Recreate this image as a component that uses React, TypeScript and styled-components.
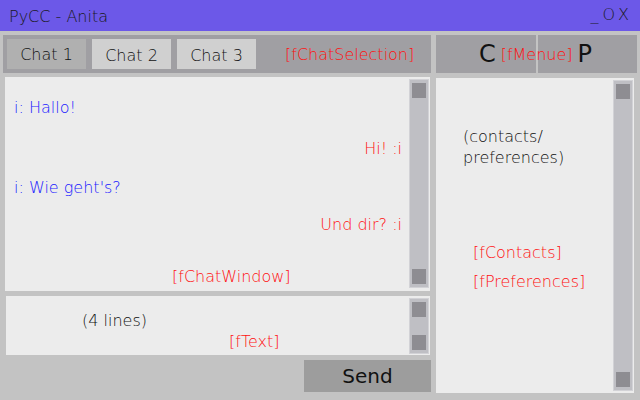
import React from "react";
import styled, { createGlobalStyle } from "styled-components";

const Global = createGlobalStyle`
  html, body { margin: 0; padding: 0; }
  body { font-family: "DejaVu Sans", sans-serif; }
`;

const Window = styled.div`
  width: 640px;
  height: 400px;
  background: #c3c3c3;
  display: flex;
  flex-direction: column;
  overflow: hidden;
`;

const TitleBar = styled.div`
  height: 31px;
  background: #6c58e8;
  display: flex;
  align-items: center;
  justify-content: space-between;
  padding: 0 11px 0 9px;
  color: #1a1a1a;
  font-size: 16px;
  font-weight: 200;
`;

const Title = styled.span`
  margin-top: 2px;
`;

const WinControls = styled.span`
  letter-spacing: 4px;
  font-size: 16px;
  margin-top: -3px;
  margin-right: -4px;
`;

const Main = styled.div`
  flex: 1;
  display: flex;
  gap: 5px;
  padding: 4px 3px 7px 3px;
  min-height: 0;
`;

const LeftCol = styled.div`
  width: 428px;
  display: flex;
  flex-direction: column;
`;

const RightCol = styled.div`
  flex: 1;
  display: flex;
  flex-direction: column;
  gap: 5px;
`;

const TabBar = styled.div`
  height: 38px;
  box-sizing: border-box;
  background: #a09fa3;
  display: flex;
  align-items: center;
  padding: 0 4px;
  gap: 6px;
`;

const Tab = styled.div<{ $active?: boolean }>`
  width: 79px;
  height: 30px;
  background: ${(p) => (p.$active ? "#b0b0b0" : "#d0d0d0")};
  display: flex;
  align-items: center;
  justify-content: center;
  font-size: 16px;
  font-weight: 200;
  color: #111;
  padding-top: ${(p) => (p.$active ? "0" : "2px")};
  box-sizing: border-box;
`;

const Label = styled.span`
  color: #ff1010;
  font-size: 16px;
  font-weight: 200;
`;

const TabLabel = styled(Label)`
  margin-left: 23px;
`;

const ChatWindow = styled.div`
  margin: 4px 1px 0 2px;
  height: 214px;
  background: #ececec;
  display: flex;
`;

const Content = styled.div`
  flex: 1;
  display: flex;
  flex-direction: column;
  padding: 0 0 0 9px;
  min-width: 0;
`;

const Msg = styled.div<{ $mine?: boolean; $top: number }>`
  margin-top: ${(p) => p.$top}px;
  color: ${(p) => (p.$mine ? "#ff1010" : "#1a1aff")};
  align-self: ${(p) => (p.$mine ? "flex-end" : "flex-start")};
  margin-right: ${(p) => (p.$mine ? "7px" : "0")};
  font-size: 16px;
  font-weight: 200;
  line-height: 20px;
`;

const ChatLabel = styled(Label)`
  margin-top: 32px;
  margin-left: 158px;
  line-height: 20px;
`;

const ScrollTrack = styled.div<{ $inset?: number }>`
  width: 20px;
  background: #bfbfc4;
  margin: 2px 1px ${(p) => p.$inset ?? 3}px 0;
  display: flex;
  flex-direction: column;
  justify-content: space-between;
  padding: 3px 2px;
  box-sizing: border-box;
  border: 1px solid #d2d2d6;
`;

const Thumb = styled.div`
  height: 15px;
  background: #8e8d92;
`;

const TextBox = styled.div`
  margin: 5px 1px 0 3px;
  height: 59px;
  background: #ececec;
  display: flex;
`;

const TextContent = styled.div`
  flex: 1;
  display: flex;
  flex-direction: column;
  padding-top: 15px;
`;

const Hint = styled.div<{ $left: number }>`
  margin-left: ${(p) => p.$left}px;
  font-size: 16px;
  font-weight: 200;
  color: #111;
  line-height: 20px;
`;

const TextLabel = styled(Label)`
  margin-left: 223px;
  line-height: 20px;
  margin-top: 1px;
`;

const SendRow = styled.div`
  margin-top: 5px;
  display: flex;
  justify-content: flex-end;
`;

const SendButton = styled.div`
  width: 127px;
  height: 32px;
  background: #9d9d9d;
  display: flex;
  align-items: center;
  justify-content: center;
  font-size: 20px;
  color: #111;
  box-sizing: border-box;
`;

const Menu = styled.div`
  height: 38px;
  display: flex;
  gap: 2px;
  position: relative;
`;

const MenuHalf = styled.div`
  flex: 1;
  background: #a09fa3;
`;

const MenuOverlay = styled.div`
  position: absolute;
  inset: 0;
  display: flex;
  align-items: center;
  justify-content: center;
  gap: 5px;
  padding-right: 2px;
`;

const Big = styled.span`
  font-size: 24px;
  color: #111;
  font-weight: 400;
`;

const SidePanel = styled.div`
  flex: 1;
  background: #ececec;
  display: flex;
  margin-right: 3px;
`;

const SideContent = styled.div`
  flex: 1;
  display: flex;
  flex-direction: column;
  padding-top: 48px;
`;

const SideText = styled.div`
  margin-left: 27px;
  font-size: 16px;
  font-weight: 200;
  color: #111;
  line-height: 21px;
`;

const SideLabel = styled(Label)<{ $top?: number }>`
  margin-left: 37px;
  line-height: 29px;
  margin-top: ${(p) => p.$top ?? 0}px;
`;

export default function App() {
  return (
    <Window>
      <Global />
      <TitleBar>
        <Title>PyCC - Anita</Title>
        <WinControls>_OX</WinControls>
      </TitleBar>
      <Main>
        <LeftCol>
          <TabBar>
            <Tab $active>Chat 1</Tab>
            <Tab>Chat 2</Tab>
            <Tab>Chat 3</Tab>
            <TabLabel>[fChatSelection]</TabLabel>
          </TabBar>
          <ChatWindow>
            <Content>
              <Msg $top={21}>i: Hallo!</Msg>
              <Msg $mine $top={21}>Hi! :i</Msg>
              <Msg $top={19}>i: Wie geht's?</Msg>
              <Msg $mine $top={17}>Und dir? :i</Msg>
              <ChatLabel>[fChatWindow]</ChatLabel>
            </Content>
            <ScrollTrack>
              <Thumb />
              <Thumb />
            </ScrollTrack>
          </ChatWindow>
          <TextBox>
            <TextContent>
              <Hint $left={76}>(4 lines)</Hint>
              <TextLabel>[fText]</TextLabel>
            </TextContent>
            <ScrollTrack $inset={1}>
              <Thumb />
              <Thumb />
            </ScrollTrack>
          </TextBox>
          <SendRow>
            <SendButton>Send</SendButton>
          </SendRow>
        </LeftCol>
        <RightCol>
          <Menu>
            <MenuHalf />
            <MenuHalf />
            <MenuOverlay>
              <Big>C</Big>
              <Label>[fMenue]</Label>
              <Big>P</Big>
            </MenuOverlay>
          </Menu>
          <SidePanel>
            <SideContent>
              <SideText>(contacts/</SideText>
              <SideText>preferences)</SideText>
              <SideLabel $top={70}>[fContacts]</SideLabel>
              <SideLabel>[fPreferences]</SideLabel>
            </SideContent>
            <ScrollTrack $inset={2}>
              <Thumb />
              <Thumb />
            </ScrollTrack>
          </SidePanel>
        </RightCol>
      </Main>
    </Window>
  );
}
